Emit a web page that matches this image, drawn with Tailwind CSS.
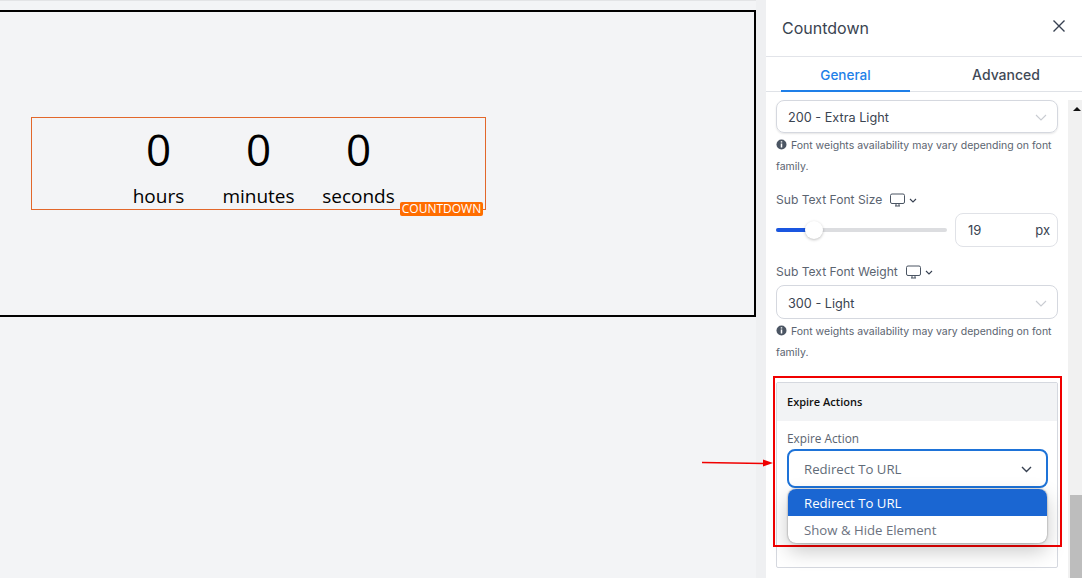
<!DOCTYPE html>
<html lang="en">
<head>
  <meta charset="UTF-8" />
  <title>Countdown</title>
  <script src="https://cdn.jsdelivr.net/npm/@tailwindcss/browser@4"></script>
</head>
<body class="w-[1082px] h-[578px] overflow-hidden bg-[#f3f4f6] font-['Inter',sans-serif]">
  <div class="flex h-[578px]">
    <!-- canvas -->
    <main class="relative z-10 w-[756px] shrink-0 pt-[9px] border-t border-[#e3e4e6]">
      <section class="w-[756px] h-[307px] border-2 border-l-0 border-black pt-[105px] pl-[31px]">
        <div class="relative w-[455px] h-[93px] border border-[#e2672a] font-['Open_Sans',sans-serif] text-black">
          <div class="flex justify-center">
            <div class="w-[100px] text-center">
              <div class="text-[44px] leading-[54px] mt-[4px]">0</div>
              <div class="text-[19px] leading-[26px] mt-[7px]">hours</div>
            </div>
            <div class="w-[100px] text-center">
              <div class="text-[44px] leading-[54px] mt-[4px]">0</div>
              <div class="text-[19px] leading-[26px] mt-[7px]">minutes</div>
            </div>
            <div class="w-[100px] text-center">
              <div class="text-[44px] leading-[54px] mt-[4px]">0</div>
              <div class="text-[19px] leading-[26px] mt-[7px]">seconds</div>
            </div>
          </div>
          <span class="absolute left-[368px] top-[84px] w-[83px] h-[14px] rounded-[2px] bg-[#ff6d00] text-white text-[12px] leading-[14px] text-center">COUNTDOWN</span>
        </div>
      </section>
      <svg class="absolute left-[702px] top-[457px]" width="72" height="10" viewBox="0 0 72 10">
        <path d="M0 4.6L62 5.4" stroke="#f00000" stroke-width="1.5" fill="none" />
        <path d="M61 1.5L71 5L61 8.5Z" fill="#f00000" />
      </svg>
    </main>
    <div class="w-[10px] shrink-0 bg-[#eff0f2]"></div>

    <!-- settings panel -->
    <aside class="relative w-[316px] h-[578px] bg-white shrink-0 overflow-hidden">
      <header class="flex justify-between h-[57px] border-b border-[#e2e4e9] pl-[16px] pr-[16px]">
        <h2 class="text-[16px] leading-[20px] mt-[18px] text-[#3a4451]">Countdown</h2>
        <svg class="mt-[19px]" width="14" height="14" viewBox="0 0 14 14" fill="none" stroke="#374151" stroke-width="1.4">
          <path d="M1.5 1.5L12.5 12.5M12.5 1.5L1.5 12.5" />
        </svg>
      </header>
      <nav class="flex h-[35px] border-b border-[#dfe2e7] pl-[15px] text-[13.5px] leading-[18px] font-medium">
        <div class="w-[129px] h-[35px] pt-[9px] text-center text-[#1f7fe8] border-b-2 border-[#1f7fe8]">General</div>
        <div class="w-[134px] ml-[29px] pt-[9px] text-center text-[14px] text-[#3f4956]">Advanced</div>
      </nav>

      <div class="px-[10px] text-[#5b6470]">
        <div class="flex items-center justify-between h-[33px] mt-[8px] w-[282px] pt-[2px] pl-[11px] pr-[10px] rounded-[8px] border border-[#d5d8df] shadow-[0_1px_2px_#0000001a] text-[12.7px] text-[#3a4451]">
          200 - Extra Light
          <svg width="12" height="7" viewBox="0 0 12 7" fill="none" stroke="#c9ccd2" stroke-width="1.1"><path d="M1 1L6 6L11 1" /></svg>
        </div>
        <p class="text-[10.5px] leading-[21px] mt-[2px] w-[282px]">
          <svg class="inline align-[-1px] mr-[1px]" width="11" height="11" viewBox="0 0 11 11"><circle cx="5.5" cy="5.5" r="5" fill="#4b5563" /><path d="M5.5 2.2V3.4M5.5 4.6V8.6" stroke="#fff" stroke-width="1.5" /></svg>
          Font weights availability may vary depending on font family.
        </p>

        <div class="flex items-center mt-[14px] h-[18px] text-[12.1px]">
          Sub Text Font Size
          <svg class="ml-[8px]" width="15" height="14" viewBox="0 0 15 14" fill="none" stroke="#4b5563" stroke-width="1"><rect x="0.5" y="1" width="14" height="9.5" rx="1.5" /><path d="M5 13H10M6 10.5V13M9 10.5V13" /></svg>
          <svg class="ml-[4px]" width="8" height="5" viewBox="0 0 8 5" fill="none" stroke="#374151" stroke-width="1.1"><path d="M1 1L4 4L7 1" /></svg>
        </div>
        <div class="flex items-center mt-[4px] h-[34px] w-[282px]">
          <div class="relative w-[171px] h-[4px] rounded-full bg-[#dcdde0]">
            <div class="w-[38px] h-[4px] rounded-full bg-[#1a56e0]"></div>
            <div class="absolute left-[29px] top-[-7px] w-[18px] h-[18px] rounded-full bg-white shadow-[0_1px_3px_#00000040]"></div>
          </div>
          <div class="flex justify-between items-center ml-[8px] w-[103px] h-[34px] pt-[1px] pl-[12px] pr-[7px] rounded-[8px] border border-[#e0e2e7] text-[13px] text-[#3a4451]">
            <span>19</span><span>px</span>
          </div>
        </div>

        <div class="flex items-center mt-[16px] h-[18px] text-[12.1px]">
          Sub Text Font Weight
          <svg class="ml-[8px]" width="15" height="14" viewBox="0 0 15 14" fill="none" stroke="#4b5563" stroke-width="1"><rect x="0.5" y="1" width="14" height="9.5" rx="1.5" /><path d="M5 13H10M6 10.5V13M9 10.5V13" /></svg>
          <svg class="ml-[4px]" width="8" height="5" viewBox="0 0 8 5" fill="none" stroke="#374151" stroke-width="1.1"><path d="M1 1L4 4L7 1" /></svg>
        </div>
        <div class="flex items-center justify-between h-[34px] mt-[4px] w-[282px] pt-[3px] pl-[11px] pr-[10px] rounded-[8px] border border-[#d5d8df] text-[12.7px] text-[#3a4451]">
          300 - Light
          <svg width="12" height="7" viewBox="0 0 12 7" fill="none" stroke="#c9ccd2" stroke-width="1.1"><path d="M1 1L6 6L11 1" /></svg>
        </div>
        <p class="text-[10.5px] leading-[21px] mt-[2px] w-[282px]">
          <svg class="inline align-[-1px] mr-[1px]" width="11" height="11" viewBox="0 0 11 11"><circle cx="5.5" cy="5.5" r="5" fill="#4b5563" /><path d="M5.5 2.2V3.4M5.5 4.6V8.6" stroke="#fff" stroke-width="1.5" /></svg>
          Font weights availability may vary depending on font family.
        </p>

        <div class="w-[282px] h-[186px] mt-[19px] border border-[#d5d8df] rounded-[2px] font-['Open_Sans',sans-serif]">
          <div class="h-[38px] bg-[#f2f3f5] pl-[10px] text-[11px] leading-[38px] font-semibold text-[#111]">Expire Actions</div>
          <div class="px-[10px] pt-[9px]">
            <label class="block text-[11.8px] leading-[16px] font-medium text-[#5b6470]">Expire Action</label>
            <div class="relative mt-[3px]">
              <div class="flex items-center justify-between h-[39px] w-[261px] pt-[2px] pl-[15px] pr-[14px] rounded-[8px] border-2 border-[#1e73d8] text-[13.2px] text-[#5f6b78]">
                Redirect To URL
                <svg width="11" height="7" viewBox="0 0 11 7" fill="none" stroke="#374151" stroke-width="1.4"><path d="M1 1L5.5 5.5L10 1" /></svg>
              </div>
              <ul class="absolute z-10 left-[1px] top-[40px] w-[259px] h-[54px] rounded-[8px] overflow-hidden bg-white text-[13.2px] leading-[27px] text-[#6b7280] shadow-[0_8px_20px_#00000038,0_0_2px_#00000080]">
                <li class="h-[27px] pt-[1px] pl-[16px] bg-[#1a66d2] text-white">Redirect To URL</li>
                <li class="pt-[1px] pl-[16px]">Show &amp; Hide Element</li>
              </ul>
            </div>
          </div>
        </div>
      </div>

      <!-- scrollbar -->
      <div class="absolute right-0 top-[100px] w-[14px] h-[478px] bg-[#f1f1f1]">
        <svg class="ml-[5px] mt-[7px]" width="8" height="4" viewBox="0 0 8 4"><path d="M4 0L8 4H0Z" fill="#111" /></svg>
        <div class="absolute right-0 top-[395px] w-[12px] h-[83px] bg-[#bdbdbd]"></div>
      </div>

      <!-- highlight -->
      <div class="absolute left-[7px] top-[376px] w-[289px] h-[171px] border-2 border-[#f00000]"></div>
    </aside>
  </div>
</body>
</html>
